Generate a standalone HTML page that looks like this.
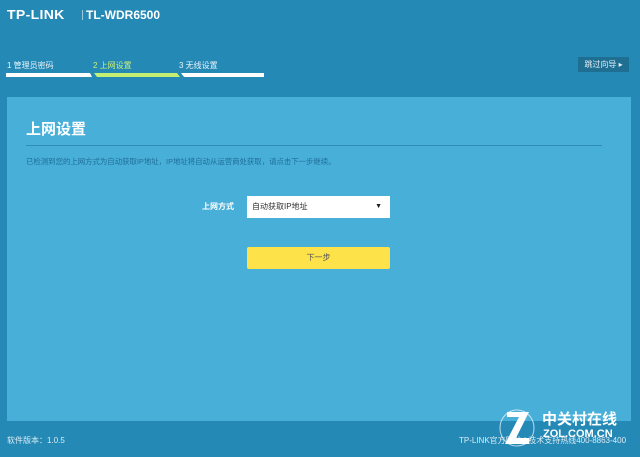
<!DOCTYPE html>
<html><head><meta charset="utf-8"><style>
*{margin:0;padding:0;box-sizing:border-box}
body{width:640px;height:457px;background:#2589b6;position:relative;overflow:hidden;font-family:"Liberation Sans","Noto Sans CJK SC",sans-serif;color:#fff}
.a{position:absolute}
.logo{left:7px;top:7px;font-weight:900;font-size:13px;letter-spacing:0.3px;transform:scaleX(1.08);transform-origin:left}
.model{left:86px;top:8px;font-size:12px;font-weight:bold}
.sep{left:82px;top:10px;width:1px;height:10px;background:#9cc9de}
.step{top:60px;font-size:8px;color:#e8f4fa}
.skip{left:578px;top:57px;width:51px;height:15px;background:#1f6f93;font-size:8px;line-height:15px;text-align:center;color:#e6f2f8}
.panel{left:7px;top:97px;width:624px;height:324px;background:#48afd9}
h1{position:absolute;left:26px;top:118px;font-size:15px;font-weight:bold}
.hr{left:26px;top:145px;width:576px;height:1px;background:#2d8cb8}
.desc{left:26px;top:156px;font-size:7.4px;color:#1e6e96}
.lbl{left:202px;top:201px;font-size:8px;font-weight:bold}
.sel{left:247px;top:196px;width:143px;height:22px;background:#fff;color:#333;font-size:8px;line-height:22px;padding-left:5px}
.btn{left:247px;top:247px;width:143px;height:22px;background:#fde24a;border-radius:2px;color:#555;font-size:8px;line-height:22px;text-align:center}
.foot{top:435px;font-size:8px;color:#dcecf4}
</style></head><body>
<div class="a logo">TP-LINK</div>
<div class="a sep"></div>
<div class="a model">TL-WDR6500</div>
<div class="a step" style="left:7px">1 管理员密码</div>
<div class="a step" style="left:93px;color:#c9f07a">2 上网设置</div>
<div class="a step" style="left:179px">3 无线设置</div>
<svg class="a" style="left:6px;top:73px" width="260" height="5"><polygon points="0,0 84,0 86,4 0,4" fill="#fff"/><polygon points="88,0 171,0 174,4 91,4" fill="#c5ef72"/><polygon points="175,0 258,0 258,4 178,4" fill="#fff"/></svg>
<div class="a skip">跳过向导 ▸</div>
<div class="a panel"></div>
<h1>上网设置</h1>
<div class="a hr"></div>
<div class="a desc">已检测到您的上网方式为自动获取IP地址，IP地址将自动从运营商处获取，请点击下一步继续。</div>
<div class="a lbl">上网方式</div>
<div class="a sel">自动获取IP地址<span style="position:absolute;right:8px;top:0;font-size:7px;color:#222">▼</span></div>
<div class="a btn">下一步</div>
<div class="a foot" style="left:7px">软件版本：1.0.5</div>
<div class="a foot" style="left:459px">TP-LINK官方网站 | 技术支持热线400-8863-400</div>
<svg class="a" style="left:497px;top:405px" width="42" height="45"><ellipse cx="20" cy="23" rx="17" ry="18" fill="none" stroke="#fff" stroke-width="1" opacity="0.7"/><path d="M10,7 L32,7 L19,33 L32,33 L32,39 L8,39 L22,12 L10,12 Z" fill="#fff"/></svg>
<div class="a" style="left:542px;top:408px;font-size:15px;font-weight:bold">中关村在线</div>
<div class="a" style="left:543px;top:428px;font-size:11px;font-weight:bold">ZOL.COM.CN</div>
</body></html>
